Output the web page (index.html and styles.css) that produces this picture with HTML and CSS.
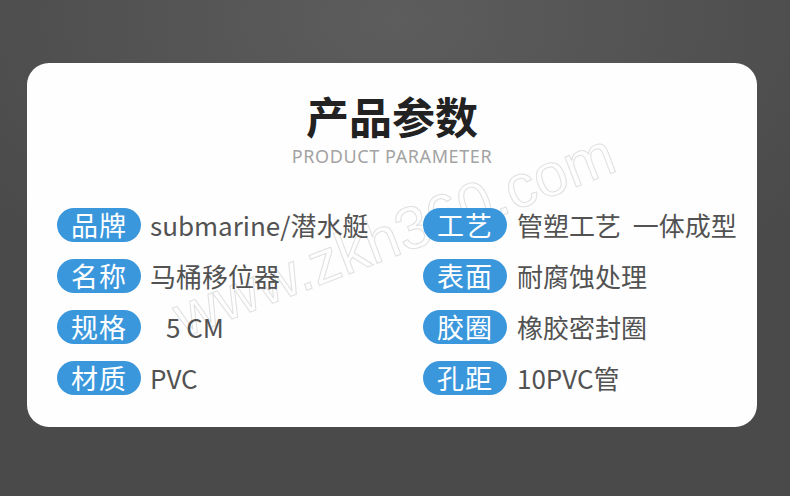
FILE: index.html
```html
<!DOCTYPE html>
<html lang="zh">
<head>
<meta charset="utf-8">
<link rel="stylesheet" href="styles.css">
</head>
<body>
<div class="page">
  <div class="card">
    <div class="watermark">www.zkh360.com</div>
    <h1 class="title">产品参数</h1>
    <div class="subtitle">PRODUCT PARAMETER</div>
    <div class="grid">
      <div class="col col-left">
        <div class="row"><span class="pill">品牌</span><span class="val">submarine/潜水艇</span></div>
        <div class="row"><span class="pill">名称</span><span class="val">马桶移位器</span></div>
        <div class="row"><span class="pill">规格</span><span class="val val-indent">5 CM</span></div>
        <div class="row"><span class="pill">材质</span><span class="val">PVC</span></div>
      </div>
      <div class="col col-right">
        <div class="row"><span class="pill">工艺</span><span class="val">管塑工艺&nbsp;&nbsp;一体成型</span></div>
        <div class="row"><span class="pill">表面</span><span class="val">耐腐蚀处理</span></div>
        <div class="row"><span class="pill">胶圈</span><span class="val">橡胶密封圈</span></div>
        <div class="row"><span class="pill">孔距</span><span class="val">10PVC管</span></div>
      </div>
    </div>
  </div>
</div>
</body>
</html>
```
FILE: styles.css
```css
html, body {
  margin: 0;
  padding: 0;
}
body {
  width: 790px;
  height: 496px;
  overflow: hidden;
  background: radial-gradient(ellipse 520px 300px at 395px 20px, #5d5d5d 0%, #515151 60%, #4a4a4a 100%);
  background-color: #4a4a4a;
  font-family: "Noto Sans CJK SC", "Noto Sans", sans-serif;
}
.page {
  padding: 63px 0 0 27px;
}
.card {
  position: relative;
  width: 730px;
  height: 364px;
  box-sizing: border-box;
  background: #fefefe;
  border-radius: 22px;
  padding-top: 26px;
  overflow: hidden;
}
.watermark {
  position: absolute;
  left: 160px;
  top: 224px;
  font-family: "Liberation Sans", sans-serif;
  font-size: 60px;
  line-height: 60px;
  color: transparent;
  -webkit-text-stroke: 1px #e0e0e0;
  transform: rotate(-21deg);
  transform-origin: 0 100%;
  white-space: nowrap;
}
.title {
  position: relative;
  margin: 0;
  text-align: center;
  font-size: 43px;
  font-weight: 700;
  line-height: 52px;
  color: #222222;
}
.subtitle {
  position: relative;
  margin-top: 4px;
  text-align: center;
  font-family: "Noto Sans", sans-serif;
  font-size: 18px;
  line-height: 22px;
  color: #a3a3a3;
  letter-spacing: 0.6px;
}
.grid {
  position: relative;
  display: flex;
  margin-top: 41px;
  padding-left: 30px;
}
.col {
  display: flex;
  flex-direction: column;
  gap: 17px;
}
.col-left {
  width: 366px;
}
.row {
  display: flex;
  align-items: center;
  height: 34px;
}
.pill {
  display: flex;
  align-items: center;
  justify-content: center;
  width: 84px;
  height: 34px;
  border-radius: 17px;
  background: #3b97dc;
  color: #ffffff;
  font-size: 27px;
  line-height: 34px;
  letter-spacing: 1px;
}
.val {
  margin-left: 9px;
  font-size: 26px;
  line-height: 34px;
  color: #525252;
  white-space: pre;
}
.col-right .val {
  margin-left: 10px;
}
.val-indent {
  padding-left: 16px;
}
```
